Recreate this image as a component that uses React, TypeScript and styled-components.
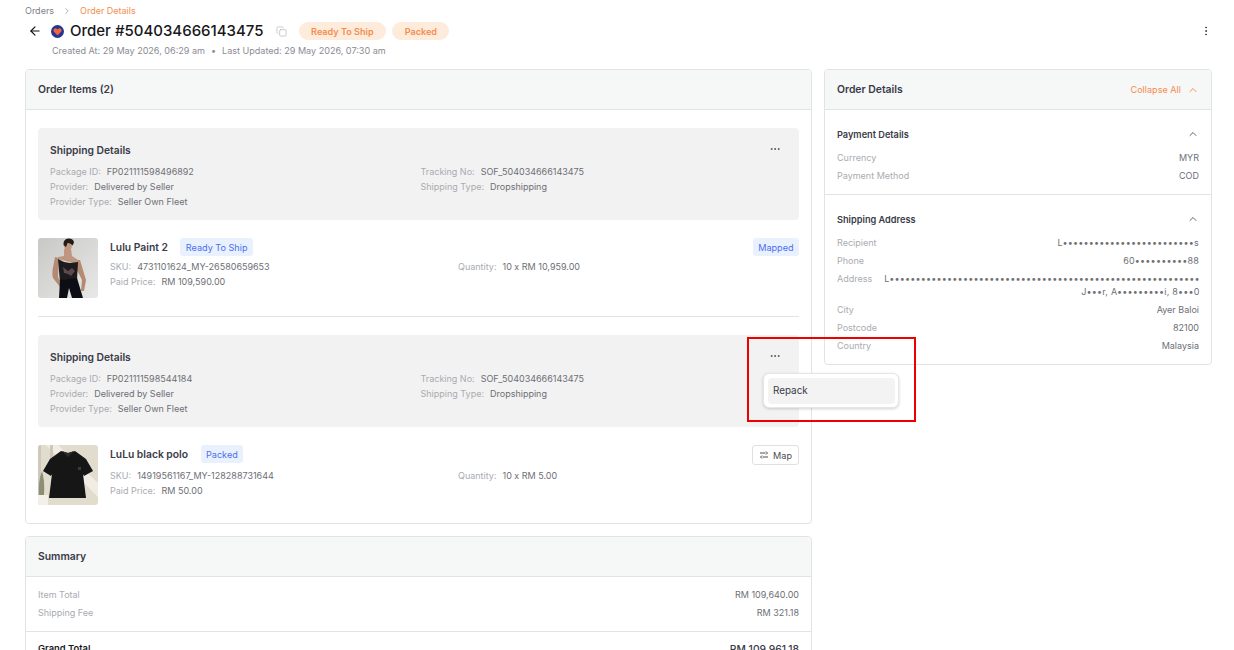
import React from "react";
import styled, { createGlobalStyle } from "styled-components";
import { ArrowLeft, ChevronRight, ChevronUp, Copy, Ellipsis, EllipsisVertical } from "lucide-react";

const Global = createGlobalStyle`
  html, body { margin: 0; padding: 0; background: #fff; height: 650px; overflow: hidden; }
  body { font-family: Inter, "Liberation Sans", sans-serif; color: #3a3b48; -webkit-font-smoothing: antialiased; }
  * { box-sizing: border-box; }
`;

const Page = styled.div`
  position: relative;
  width: 1234px;
  height: 650px;
  overflow: hidden;
  padding: 5px 22px 0 25px;
`;
const Crumbs = styled.nav`
  display: flex;
  align-items: center;
  height: 11px;
  font-size: 9px;
  line-height: 11px;
  color: #7d7f87;
  gap: 8px;
`;
const CrumbActive = styled.span`
  color: #f58d4f;
`;
const TitleRow = styled.div`
  display: flex;
  align-items: center;
  height: 22px;
  margin-top: 4px;
  padding-left: 3px;
  position: relative;
`;
const Back = styled.span`
  display: flex;
  width: 14px;
  color: #111;
`;
const Logo = styled.svg`
  width: 13px;
  height: 13px;
  margin-left: 9px;
`;
const Title = styled.h1`
  margin: 0 0 0 6px;
  font-size: 15px;
  line-height: 22px;
  font-weight: 500;
  color: #17181c;
  white-space: nowrap;
`;
const CopyIcon = styled.span`
  display: flex;
  margin-left: 12px;
  color: #b5b6ba;
`;
const Pill = styled.span<{ $first?: boolean }>`
  display: flex;
  align-items: center;
  height: 18px;
  padding: 0 12.5px;
  border-radius: 9px;
  background: #fdebdc;
  color: #f58d4f;
  font-size: 9.1px;
  font-weight: 600;
  margin-left: ${(p) => (p.$first ? "12px" : "6px")};
`;
const More = styled.span`
  position: absolute;
  right: 0;
  top: 5px;
  display: flex;
  color: #3b3c42;
`;
const Sub = styled.div`
  display: flex;
  gap: 6px;
  margin: 3px 0 0 27px;
  font-size: 9.05px;
  line-height: 12px;
  color: #8a8c93;
  white-space: nowrap;
`;
const Columns = styled.div`
  display: grid;
  grid-template-columns: 787px 388px;
  gap: 12px;
  align-items: start;
  margin-top: 12px;
`;
const Stack = styled.div`
  display: flex;
  flex-direction: column;
  gap: 12px;
`;
const Card = styled.section`
  border: 1px solid #e2e3e4;
  border-radius: 4px;
  background: #fff;
  overflow: hidden;
`;
const CardHead = styled.header`
  display: flex;
  align-items: center;
  justify-content: space-between;
  height: 40px;
  padding: 0 12px;
  background: #f6f7f7;
  border-bottom: 1px solid #e2e3e4;
  font-size: 10.4px;
  font-weight: 600;
  color: #3a3b48;
`;
const CollapseAll = styled.span`
  display: flex;
  align-items: center;
  gap: 6px;
  color: #f58d4f;
  font-size: 9.1px;
  font-weight: 400;
`;
const CardBody = styled.div`
  padding: 18px 12px;
`;
const ShipBox = styled.div`
  position: relative;
  height: 92px;
  padding: 15px 12px 0;
  background: #f2f2f2;
  border-radius: 4px;
`;
const ShipTitle = styled.h3`
  margin: 0 0 7px;
  font-size: 10.3px;
  line-height: 14px;
  font-weight: 600;
  color: #3a3b48;
`;
const ShipGrid = styled.div`
  display: grid;
  grid-template-columns: 370.5px 1fr;
`;
const Line = styled.div`
  display: flex;
  gap: 6px;
  font-size: 9px;
  line-height: 15px;
  white-space: nowrap;
`;
const Label = styled.span`
  color: #a9abb0;
`;
const Value = styled.span`
  color: #6d6f76;
`;
const Dots = styled.span`
  position: absolute;
  top: 15px;
  right: 18px;
  display: flex;
  color: #55565c;
`;
const Item = styled.div`
  position: relative;
  display: flex;
  margin-top: 18px;
  height: 60px;
`;
const Thumb = styled.svg`
  flex: none;
  width: 60px;
  height: 60px;
  border-radius: 3px;
`;
const ItemInfo = styled.div`
  flex: 1;
  margin-left: 12px;
`;
const NameRow = styled.div<{ $tall?: boolean }>`
  display: flex;
  align-items: center;
  gap: 12.5px;
  height: 18px;
  margin-bottom: ${(p) => (p.$tall ? "5px" : "3px")};
`;
const Name = styled.span`
  font-size: 10.3px;
  font-weight: 600;
  color: #3a3b48;
`;
const Tag = styled.span`
  display: inline-flex;
  align-items: center;
  height: 18px;
  padding: 0 5.5px;
  border-radius: 3px;
  background: #e9f1fe;
  color: #4a6ff0;
  font-size: 9.1px;
`;
const ItemGrid = styled.div`
  display: grid;
  grid-template-columns: 348px 1fr;
`;
const Corner = styled.div`
  position: absolute;
  top: 0;
  right: 0;
  display: flex;
`;
const MapButton = styled.span`
  display: flex;
  align-items: center;
  gap: 4px;
  height: 20px;
  padding: 0 6px;
  border: 1px solid #dfe0e2;
  border-radius: 3px;
  font-size: 9.1px;
  color: #4b4c53;
  background: #fff;
`;
const MapIcon = styled.svg`
  width: 10px;
  height: 10px;
  fill: none;
  stroke: #4b4c53;
  stroke-width: 1;
`;
const Divider = styled.hr`
  border: 0;
  border-top: 1px solid #e2e3e4;
  margin: 18px 0;
`;
const SummaryBody = styled.div`
  padding: 9px 12px 9px;
  border-bottom: 1px solid #e2e3e4;
`;
const Row = styled.div`
  display: flex;
  justify-content: space-between;
  gap: 12px;
  font-size: 9px;
  line-height: 18px;
`;
const RowValue = styled.span`
  color: #6d6f76;
  text-align: right;
  line-height: 12.5px;
  padding: 3px 0 2.5px;
  white-space: nowrap;
`;
const Masked = styled.span`
  letter-spacing: 0.2px;
`;
const GrandRow = styled.div`
  display: flex;
  justify-content: space-between;
  padding: 11px 12px;
  font-size: 9.4px;
  line-height: 12px;
  font-weight: 600;
  color: #17181c;
`;
const GrandValue = styled.span`
  font-size: 10.3px;
  font-weight: 500;
  color: #3a3b48;
`;
const Section = styled.div<{ $line?: boolean }>`
  padding: 15px 12px 9px;
  border-bottom: ${(p) => (p.$line ? "1px solid #e2e3e4" : "0")};
`;
const SectionHead = styled.div`
  display: flex;
  justify-content: space-between;
  align-items: center;
  height: 18px;
  margin-bottom: 6px;
  font-size: 9.2px;
  font-weight: 600;
  color: #3a3b48;
`;
const Menu = styled.div`
  position: absolute;
  left: 763px;
  top: 373px;
  width: 136px;
  height: 35px;
  padding: 3.5px;
  background: #fff;
  border: 1px solid #e6e6e6;
  border-radius: 6px;
  box-shadow: 0 1px 3px rgba(0, 0, 0, 0.18);
`;
const MenuItem = styled.div`
  height: 26px;
  padding-left: 5.5px;
  background: #f3f3f3;
  border-radius: 4px;
  font-size: 9.9px;
  line-height: 25px;
  color: #3a3b48;
`;
const Highlight = styled.div`
  position: absolute;
  left: 747px;
  top: 337px;
  width: 169px;
  height: 85px;
  border: 2px solid #ee0000;
  pointer-events: none;
`;

const WomanPhoto = () => (
  <Thumb viewBox="0 0 60 60">
    <defs>
      <linearGradient id="wall" x1="0" y1="0" x2="1" y2="1">
        <stop offset="0" stopColor="#c8c8c6" />
        <stop offset="1" stopColor="#e8e8e6" />
      </linearGradient>
      <filter id="soft"><feGaussianBlur stdDeviation="0.45" /></filter>
    </defs>
    <rect width="60" height="60" fill="url(#wall)" />
    <g filter="url(#soft)">
      <path d="M17 19l4 1-1 19 4 8-2 2-7-9q-1-3-.5-8z" fill="#b48a73" />
      <path d="M38 22l4 0 6 20-2 11h-3l1-11-6-12z" fill="#b48a73" />
      <path d="M26 11h7l1 7 6 4-1 4-19-5 0-2 6-1z" fill="#bf967f" />
      <ellipse cx="30" cy="8" rx="3.8" ry="5" fill="#bf967f" />
      <path d="M25.5 7q-.5-6 5-6.5 5 0 5.5 4l-1.5 3q-2-3-5-2.5l-1.5 4z" fill="#241a17" />
      <path d="M20 21l6 3 6 1 8-1-1 18-17 2z" fill="#1b1a1d" />
      <path d="M25 29l5 4 4-3 3 3-4 5-3-2-4-1z" fill="#5e4650" />
      <path d="M22 42l17-2 6 20H34l-3-10-2 10h-8z" fill="#111113" />
    </g>
  </Thumb>
);

const PoloPhoto = () => (
  <Thumb viewBox="0 0 60 60">
    <defs>
      <filter id="soft2"><feGaussianBlur stdDeviation="0.45" /></filter>
    </defs>
    <rect width="60" height="60" fill="#e2dccf" />
    <path d="M8 0h12l40 38v14z" fill="#f1ede5" />
    <path d="M0 0h3v60H0z" fill="#cfc8ba" />
    <path d="M12 0h3v16h-3z" fill="#cfc8ba" />
    <g filter="url(#soft2)">
      <path d="M0 50h10v10H0z" fill="#f3f0ea" />
      <path d="M1 50q-1-14 3-24 3 10 2 24z" fill="#8a8f74" />
      <path d="M23 6L30 8 37 6 48 14 55 26 46 31 45 29 48 53 11 53 14 29 13 31 5 26 12 14z" fill="#141415" />
      <path d="M24 6l6 6 6-6-6 2z" fill="#2b2b2d" />
      <rect x="40" y="22" width="3" height="3" fill="#3a3a3c" />
    </g>
  </Thumb>
);

const Ship = ({ id, track }: { id: string; track: string }) => (
  <ShipBox>
    <ShipTitle>Shipping Details</ShipTitle>
    <Dots><Ellipsis size={12} strokeWidth={2} /></Dots>
    <ShipGrid>
      <div>
        <Line><Label>Package ID:</Label><Value>{id}</Value></Line>
        <Line><Label>Provider:</Label><Value>Delivered by Seller</Value></Line>
        <Line><Label>Provider Type:</Label><Value>Seller Own Fleet</Value></Line>
      </div>
      <div>
        <Line><Label>Tracking No:</Label><Value>{track}</Value></Line>
        <Line><Label>Shipping Type:</Label><Value>Dropshipping</Value></Line>
      </div>
    </ShipGrid>
  </ShipBox>
);

type ItemProps = {
  photo: React.ReactNode;
  name: string;
  status: string;
  sku: string;
  qty: string;
  price: string;
  corner: React.ReactNode;
  tall?: boolean;
};

const OrderItem = ({ photo, name, status, sku, qty, price, corner, tall }: ItemProps) => (
  <Item>
    {photo}
    <ItemInfo>
      <NameRow $tall={tall}><Name>{name}</Name><Tag>{status}</Tag></NameRow>
      <ItemGrid>
        <Line><Label>SKU:</Label><Value>{sku}</Value></Line>
        <Line><Label>Quantity:</Label><Value>{qty}</Value></Line>
      </ItemGrid>
      <Line><Label>Paid Price:</Label><Value>{price}</Value></Line>
    </ItemInfo>
    <Corner>{corner}</Corner>
  </Item>
);

const Pair = ({ k, v }: { k: string; v: React.ReactNode }) => (
  <Row><Label>{k}</Label><RowValue>{v}</RowValue></Row>
);

export default function App() {
  return (
    <Page>
      <Global />
      <Crumbs>
        <span>Orders</span>
        <ChevronRight size={10} strokeWidth={1.5} />
        <CrumbActive>Order Details</CrumbActive>
      </Crumbs>
      <TitleRow>
        <Back><ArrowLeft size={14} strokeWidth={2} /></Back>
        <Logo viewBox="0 0 13 13">
          <circle cx="6.5" cy="6.5" r="6.5" fill="#26358f" />
          <path d="M6.5 10.4L2.7 6.4C1.6 4.6 3.9 2.5 5.5 3.6L6.5 4.4 7.7 3.6C9.3 2.6 11.4 4.6 10.3 6.4z" fill="#f0653f" />
        </Logo>
        <Title>Order #504034666143475</Title>
        <CopyIcon><Copy size={11} strokeWidth={1.5} /></CopyIcon>
        <Pill $first>Ready To Ship</Pill>
        <Pill>Packed</Pill>
        <More><EllipsisVertical size={12} strokeWidth={2} /></More>
      </TitleRow>
      <Sub>
        <span>Created At: 29 May 2026, 06:29 am</span>
        <span>•</span>
        <span>Last Updated: 29 May 2026, 07:30 am</span>
      </Sub>
      <Columns>
        <Stack>
          <Card>
            <CardHead>Order Items (2)</CardHead>
            <CardBody>
              <Ship id="FP021111598496892" track="SOF_504034666143475" />
              <OrderItem
                photo={<WomanPhoto />}
                name="Lulu Paint 2"
                status="Ready To Ship"
                sku="4731101624_MY-26580659653"
                qty="10 x RM 10,959.00"
                price="RM 109,590.00"
                corner={<Tag>Mapped</Tag>}
              />
              <Divider />
              <Ship id="FP021111598544184" track="SOF_504034666143475" />
              <OrderItem
                tall
                photo={<PoloPhoto />}
                name="LuLu black polo"
                status="Packed"
                sku="14919561167_MY-128288731644"
                qty="10 x RM 5.00"
                price="RM 50.00"
                corner={
                  <MapButton>
                    <MapIcon viewBox="0 0 10 10">
                      <path d="M1 3h5.5M7 1.5L8.5 3 7 4.5" />
                      <path d="M9 7H3.5M3 5.5L1.5 7 3 8.5" />
                    </MapIcon>
                    Map
                  </MapButton>
                }
              />
            </CardBody>
          </Card>
          <Card>
            <CardHead>Summary</CardHead>
            <SummaryBody>
              <Pair k="Item Total" v="RM 109,640.00" />
              <Pair k="Shipping Fee" v="RM 321.18" />
            </SummaryBody>
            <GrandRow><span>Grand Total</span><GrandValue>RM 109,961.18</GrandValue></GrandRow>
          </Card>
        </Stack>
        <Card>
          <CardHead>
            Order Details
            <CollapseAll>Collapse All <ChevronUp size={12} strokeWidth={2} /></CollapseAll>
          </CardHead>
          <Section $line>
            <SectionHead>Payment Details<ChevronUp size={12} strokeWidth={1.6} /></SectionHead>
            <Pair k="Currency" v="MYR" />
            <Pair k="Payment Method" v="COD" />
          </Section>
          <Section>
            <SectionHead>Shipping Address<ChevronUp size={12} strokeWidth={1.6} /></SectionHead>
            <Pair k="Recipient" v={<Masked>L•••••••••••••••••••••••••s</Masked>} />
            <Pair k="Phone" v={<Masked>60••••••••••88</Masked>} />
            <Pair k="Address" v={<Masked>L•••••••••••••••••••••••••••••••••••••••••••••••••••••••••••<br />J•••r, A•••••••••i, 8•••0</Masked>} />
            <Pair k="City" v="Ayer Baloi" />
            <Pair k="Postcode" v="82100" />
            <Pair k="Country" v="Malaysia" />
          </Section>
        </Card>
      </Columns>
      <Menu><MenuItem>Repack</MenuItem></Menu>
      <Highlight />
    </Page>
  );
}
